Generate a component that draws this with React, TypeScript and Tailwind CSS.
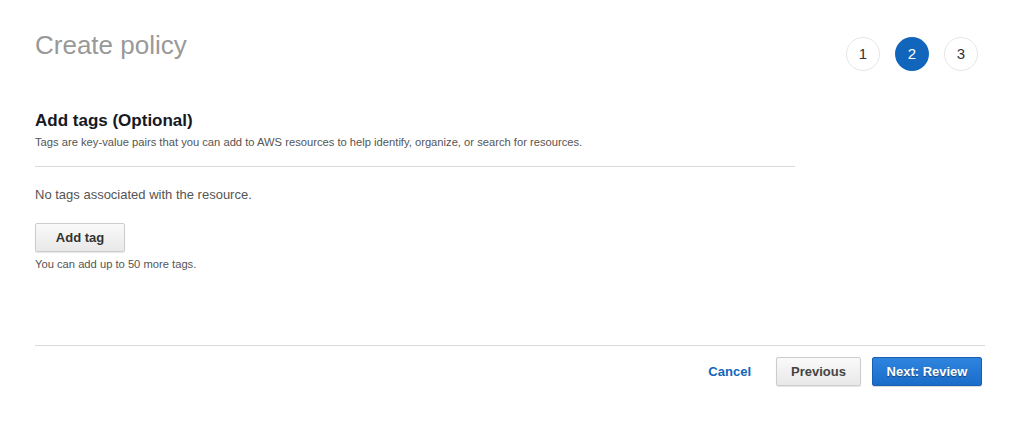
const steps = [1, 2, 3];

export default function App() {
  return (
    <div className="w-[1024px] h-[424px] bg-white pl-[35px] pr-[39px] font-['Liberation_Sans',Arial,sans-serif]">
      {/* Header */}
      <div className="flex justify-between items-start pt-[30px]">
        <h1 className="text-[26px] leading-[30px] text-[#999]">Create policy</h1>
        <div className="flex gap-[15px] mt-[7px] mr-[7px]">
          {steps.map((s) =>
            s === 2 ? (
              <div
                key={s}
                className="w-[34px] h-[34px] rounded-full bg-[#1166bb] text-white text-[15px] flex items-center justify-center"
              >
                {s}
              </div>
            ) : (
              <div
                key={s}
                className="w-[34px] h-[34px] rounded-full border border-[#e6e6e6] text-[#333] text-[15px] flex items-center justify-center"
              >
                {s}
              </div>
            )
          )}
        </div>
      </div>

      {/* Tags section */}
      <div className="w-[760px] mt-[40px]">
        <h2 className="text-[17px] leading-[20px] font-bold text-[#16191f]">Add tags (Optional)</h2>
        <p className="mt-[4px] text-[11.2px] leading-[14px] text-[#555]">
          Tags are key-value pairs that you can add to AWS resources to help identify, organize, or search for resources.
        </p>
        <div className="mt-[17px] border-t border-[#d5dbdb]" />
      </div>

      <p className="mt-[20px] text-[13px] leading-[16px] text-[#555]">No tags associated with the resource.</p>
      <button className="mt-[20px] w-[90px] h-[29px] rounded-[2px] border border-[#ccc] bg-gradient-to-b from-[#fafafa] to-[#e8e8e8] text-[13px] font-bold text-[#333] shadow-[0_1px_1px_rgba(0,0,0,0.1)]">
        Add tag
      </button>
      <p className="mt-[5px] text-[11.2px] leading-[14px] text-[#555]">You can add up to 50 more tags.</p>

      {/* Footer */}
      <div className="mt-[74px] border-t border-[#d5dbdb]" />
      <div className="flex justify-end items-center gap-[16px] mt-[11px] mr-[3px]">
        <button className="text-[13px] font-bold text-[#1166bb] mr-[9px]">Cancel</button>
        <button className="w-[85px] h-[29px] rounded-[2px] border border-[#ccc] bg-gradient-to-b from-[#fafafa] to-[#e8e8e8] text-[13px] font-bold text-[#444] shadow-[0_1px_1px_rgba(0,0,0,0.1)]">
          Previous
        </button>
        <button className="w-[110px] h-[29px] ml-[-5px] rounded-[2px] border border-[#1a5fb4] bg-gradient-to-b from-[#2e85de] to-[#1a6cc9] text-[13px] font-bold text-white [text-shadow:0_1px_1px_rgba(0,0,0,0.4)] shadow-[0_1px_1px_rgba(0,0,0,0.15)]">
          Next: Review
        </button>
      </div>
    </div>
  );
}
